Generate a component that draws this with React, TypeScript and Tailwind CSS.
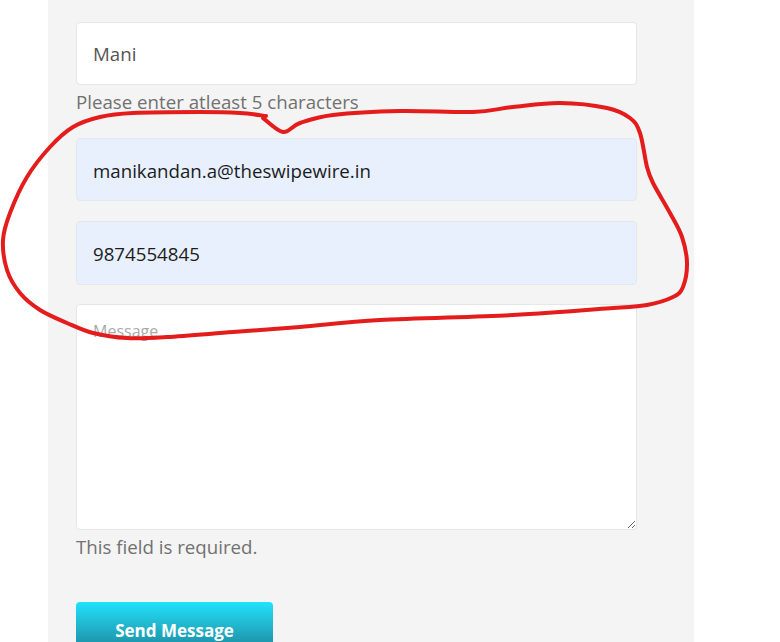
import React from 'react'

// hand-drawn annotation, points traced from the screenshot
const loop: [number, number][] = [
  [263, 118], [283, 132], [300, 123], [333, 115], [400, 111], [473, 112], [513, 107],
  [560, 103], [607, 108], [630, 118], [640, 133], [647, 167], [653, 183], [670, 213],
  [682, 237], [687, 263], [683, 287], [673, 297], [647, 305], [613, 308], [513, 315],
  [380, 320], [300, 327], [233, 332], [167, 337], [127, 338], [93, 333], [67, 323],
  [40, 310], [20, 293], [7, 270], [3, 240], [10, 213], [27, 177], [50, 147], [73, 127],
  [100, 117], [133, 113], [200, 112], [240, 113], [266, 116],
]

const smooth = (pts: [number, number][]) => {
  let d = `M ${pts[0][0]} ${pts[0][1]}`
  for (let i = 0; i < pts.length - 1; i++) {
    const p0 = pts[i - 1] || pts[i]
    const p1 = pts[i]
    const p2 = pts[i + 1]
    const p3 = pts[i + 2] || p2
    const c1x = p1[0] + (p2[0] - p0[0]) / 6
    const c1y = p1[1] + (p2[1] - p0[1]) / 6
    const c2x = p2[0] - (p3[0] - p1[0]) / 6
    const c2y = p2[1] - (p3[1] - p1[1]) / 6
    d += ` C ${c1x} ${c1y} ${c2x} ${c2y} ${p2[0]} ${p2[1]}`
  }
  return d
}

const App = () => {
  const font = { fontFamily: '"Open Sans", sans-serif' }
  return (
    <div className='relative w-[780px] h-[642px] overflow-hidden bg-white' style={font}>
      <div className='ml-[48px] w-[646px] h-full bg-[#f4f4f4] pt-[22px] pl-[28px]'>
        <div className='w-[561px] h-[63px] bg-white border border-[#e6e6e6] rounded-[4px] flex items-center px-[16px] pt-[2px] text-[18.7px] text-[#555]'>
          Mani
        </div>
        <p className='mt-[3px] text-[18.7px] leading-[28px] text-[#717171]'>Please enter atleast 5 characters</p>
        <div className='mt-[22px] w-[561px] h-[63px] bg-[#e8f0fe] border border-[#e3e8ef] rounded-[4px] flex items-center px-[16px] pt-[3px] text-[18.7px] text-[#1c1c1c]'>
          manikandan.a@theswipewire.in
        </div>
        <div className='mt-[20px] w-[561px] h-[64px] bg-[#e8f0fe] border border-[#e3e8ef] rounded-[4px] flex items-center px-[16px] pt-[2px] text-[18.7px] text-[#1c1c1c]'>
          9874554845
        </div>
        <textarea
          placeholder='Message'
          className='block mt-[19px] w-[561px] h-[226px] bg-white border border-[#e6e6e6] rounded-[4px] px-[16px] py-[14px] text-[16px] placeholder:text-[#aaa] outline-none'
          style={font}
        />
        <p className='mt-[3px] text-[18.7px] leading-[28px] text-[#717171]'>This field is required.</p>
        <button className='mt-[41px] w-[197px] h-[56px] rounded-[4px] bg-gradient-to-b from-[#22e2fc] to-[#1a7d92] text-white font-bold text-[17px] pt-[1px]'>
          Send Message
        </button>
      </div>
      <svg className='absolute inset-0 pointer-events-none' width='780' height='642'>
        <path d={smooth(loop)} fill='none' stroke='#e41c1c' strokeWidth='4' strokeLinecap='round' strokeLinejoin='round' />
      </svg>
    </div>
  )
}

export default App
